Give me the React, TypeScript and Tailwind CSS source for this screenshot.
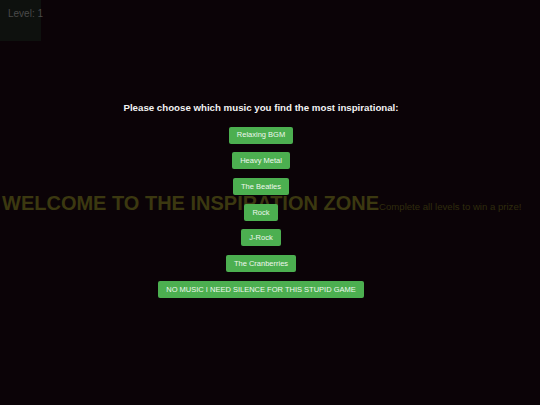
import { useState } from "react";

const choices = [
  "Relaxing BGM",
  "Heavy Metal",
  "The Beatles",
  "Rock",
  "J-Rock",
  "The Cranberries",
  "NO MUSIC I NEED SILENCE FOR THIS STUPID GAME",
];

const App = () => {
  const [level] = useState(1);
  const [picked, setPicked] = useState<string | null>(null);

  return (
    <div className="relative h-[405px] w-[540px] overflow-hidden bg-[#0b0307] font-['Liberation_Sans',Arial,sans-serif]">
      {/* game layer behind the prompt */}
      <div className="flex h-full flex-col">
        <div className="h-[41px] w-[41px] bg-[#0e110e] px-[8px] pt-[9px] text-[10px] leading-none whitespace-nowrap text-[#4a4a4a]">
          Level: {level}
        </div>
        <div className="mt-[152px] flex items-baseline pl-[2px] whitespace-nowrap">
          <h1 className="text-[20px] font-bold leading-none text-[#3b3810]">
            WELCOME TO THE INSPIRATION ZONE
          </h1>
          <p className="text-[9.6px] leading-none text-[#2f2c0d]">
            Complete all levels to win a prize!
          </p>
        </div>
      </div>

      {/* music prompt */}
      <div className="absolute inset-0 flex flex-col items-center pr-[18px] pt-[103px]">
        <p className="text-[9.7px] font-bold leading-none text-[#f2f2f2]">
          Please choose which music you find the most inspirational:
        </p>
        <div className="mt-[14px] flex flex-col items-center gap-[8.7px]">
          {choices.map((c) => (
            <button
              key={c}
              onClick={() => setPicked(c)}
              className={`h-[17px] rounded-[2px] px-[8px] text-[7.5px] leading-none text-[#eef7ee] ${
                picked === c ? "bg-[#43a047]" : "bg-[#4caf50]"
              }`}
            >
              {c}
            </button>
          ))}
        </div>
      </div>
    </div>
  );
};

export default App;
